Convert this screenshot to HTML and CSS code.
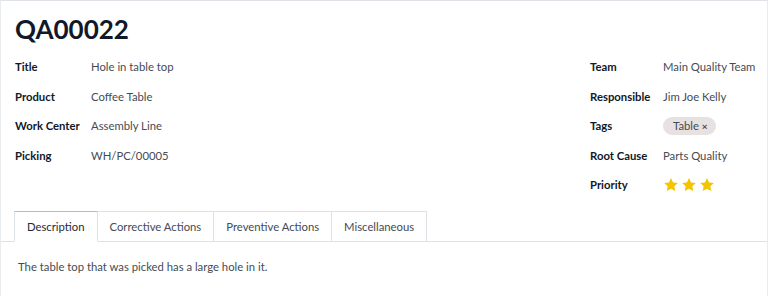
FILE: index.html
```html
<!DOCTYPE html>
<html lang="en">

<head>
    <meta charset="UTF-8">
    <meta name="viewport" content="width=device-width, initial-scale=1.0">
    <title>QA00022</title>
    <link rel="stylesheet" href="styles.css">
</head>

<body>
    <div class="sheet">
        <h1 class="ref">QA00022</h1>

        <div class="groups">
            <div class="group left">
                <div class="field"><span class="label">Title</span><span class="value">Hole in table top</span></div>
                <div class="field"><span class="label">Product</span><span class="value">Coffee Table</span></div>
                <div class="field"><span class="label">Work Center</span><span class="value">Assembly Line</span></div>
                <div class="field"><span class="label">Picking</span><span class="value">WH/PC/00005</span></div>
            </div>

            <div class="group right">
                <div class="field"><span class="label">Team</span><span class="value">Main Quality Team</span></div>
                <div class="field"><span class="label">Responsible</span><span class="value">Jim Joe Kelly</span></div>
                <div class="field">
                    <span class="label">Tags</span>
                    <span class="value"><span class="tag">Table <span class="tag-x">&#215;</span></span></span>
                </div>
                <div class="field"><span class="label">Root Cause</span><span class="value">Parts Quality</span></div>
                <div class="field">
                    <span class="label">Priority</span>
                    <span class="value stars">
                        <svg viewBox="0 0 24 24"><path d="M12 1.5l3.1 6.6 7.2.9-5.3 5 1.4 7.1L12 17.6l-6.4 3.5L7 14l-5.3-5 7.2-.9z"/></svg>
                        <svg viewBox="0 0 24 24"><path d="M12 1.5l3.1 6.6 7.2.9-5.3 5 1.4 7.1L12 17.6l-6.4 3.5L7 14l-5.3-5 7.2-.9z"/></svg>
                        <svg viewBox="0 0 24 24"><path d="M12 1.5l3.1 6.6 7.2.9-5.3 5 1.4 7.1L12 17.6l-6.4 3.5L7 14l-5.3-5 7.2-.9z"/></svg>
                    </span>
                </div>
            </div>
        </div>

        <!-- notebook tabs -->
        <ul class="tabs">
            <li class="tab active">Description</li>
            <li class="tab">Corrective Actions</li>
            <li class="tab">Preventive Actions</li>
            <li class="tab">Miscellaneous</li>
        </ul>
        <div class="tab-body">
            <p>The table top that was picked has a large hole in it.</p>
        </div>
    </div>
</body>

</html>
```

FILE: styles.css
```css
body {
    margin: 0;
    font-family: Lato, "Open Sans", Arial, sans-serif;
    font-size: 11.3px;
    color: #444b55;
    background-color: #fff;
}

.sheet {
    border-top: 1px solid #dee2e6;
    border-left: 1px solid #e9ecef;
    border-right: 1px solid #e9ecef;
    height: 296px;
    box-sizing: border-box;
}

.ref {
    margin: 0;
    padding: 10px 0 0 14px;
    font-size: 26px;
    font-weight: 700;
    line-height: 36px;
    color: #111827;
}

.groups {
    display: flex;
    justify-content: space-between;
    padding: 5px 0 0 14px;
}

.group {
    display: flex;
    flex-direction: column;
}

.right {
    width: 177px;
}

.field {
    display: flex;
    align-items: center;
    height: 29.5px;
}

.label {
    font-weight: 700;
    color: #111827;
    width: 76px;
    flex-shrink: 0;
}

.right .label {
    width: 73px;
}

.value {
    white-space: nowrap;
}

.tag {
    display: inline-block;
    background-color: #e7e1e1;
    border-radius: 10px;
    padding: 1px 8px 1px 10px;
    line-height: 16px;
    color: #444b55;
}

.tag-x {
    font-size: 10px;
    font-weight: 700;
    vertical-align: top;
}

.stars {
    display: flex;
    gap: 2px;
}

.stars svg {
    width: 16px;
    height: 16px;
    fill: #f3c500;
}

.tabs {
    list-style: none;
    margin: 11px 0 0 0;
    padding: 0 0 0 13px;
    display: flex;
    border-bottom: 1px solid #dee2e6;
}

.tab {
    padding: 0 12px;
    line-height: 29px;
    border: 1px solid #dee2e6;
    border-bottom: none;
    margin-bottom: -1px;
    color: #444b55;
}

.tab + .tab {
    border-left: none;
}

.tab.active {
    border-top-color: #c7b6c0;
    background-color: #fff;
    border-bottom: 1px solid #fff;
    color: #1f2937;
}

.tab-body p {
    margin: 0;
    padding: 18px 0 0 17px;
}
```
